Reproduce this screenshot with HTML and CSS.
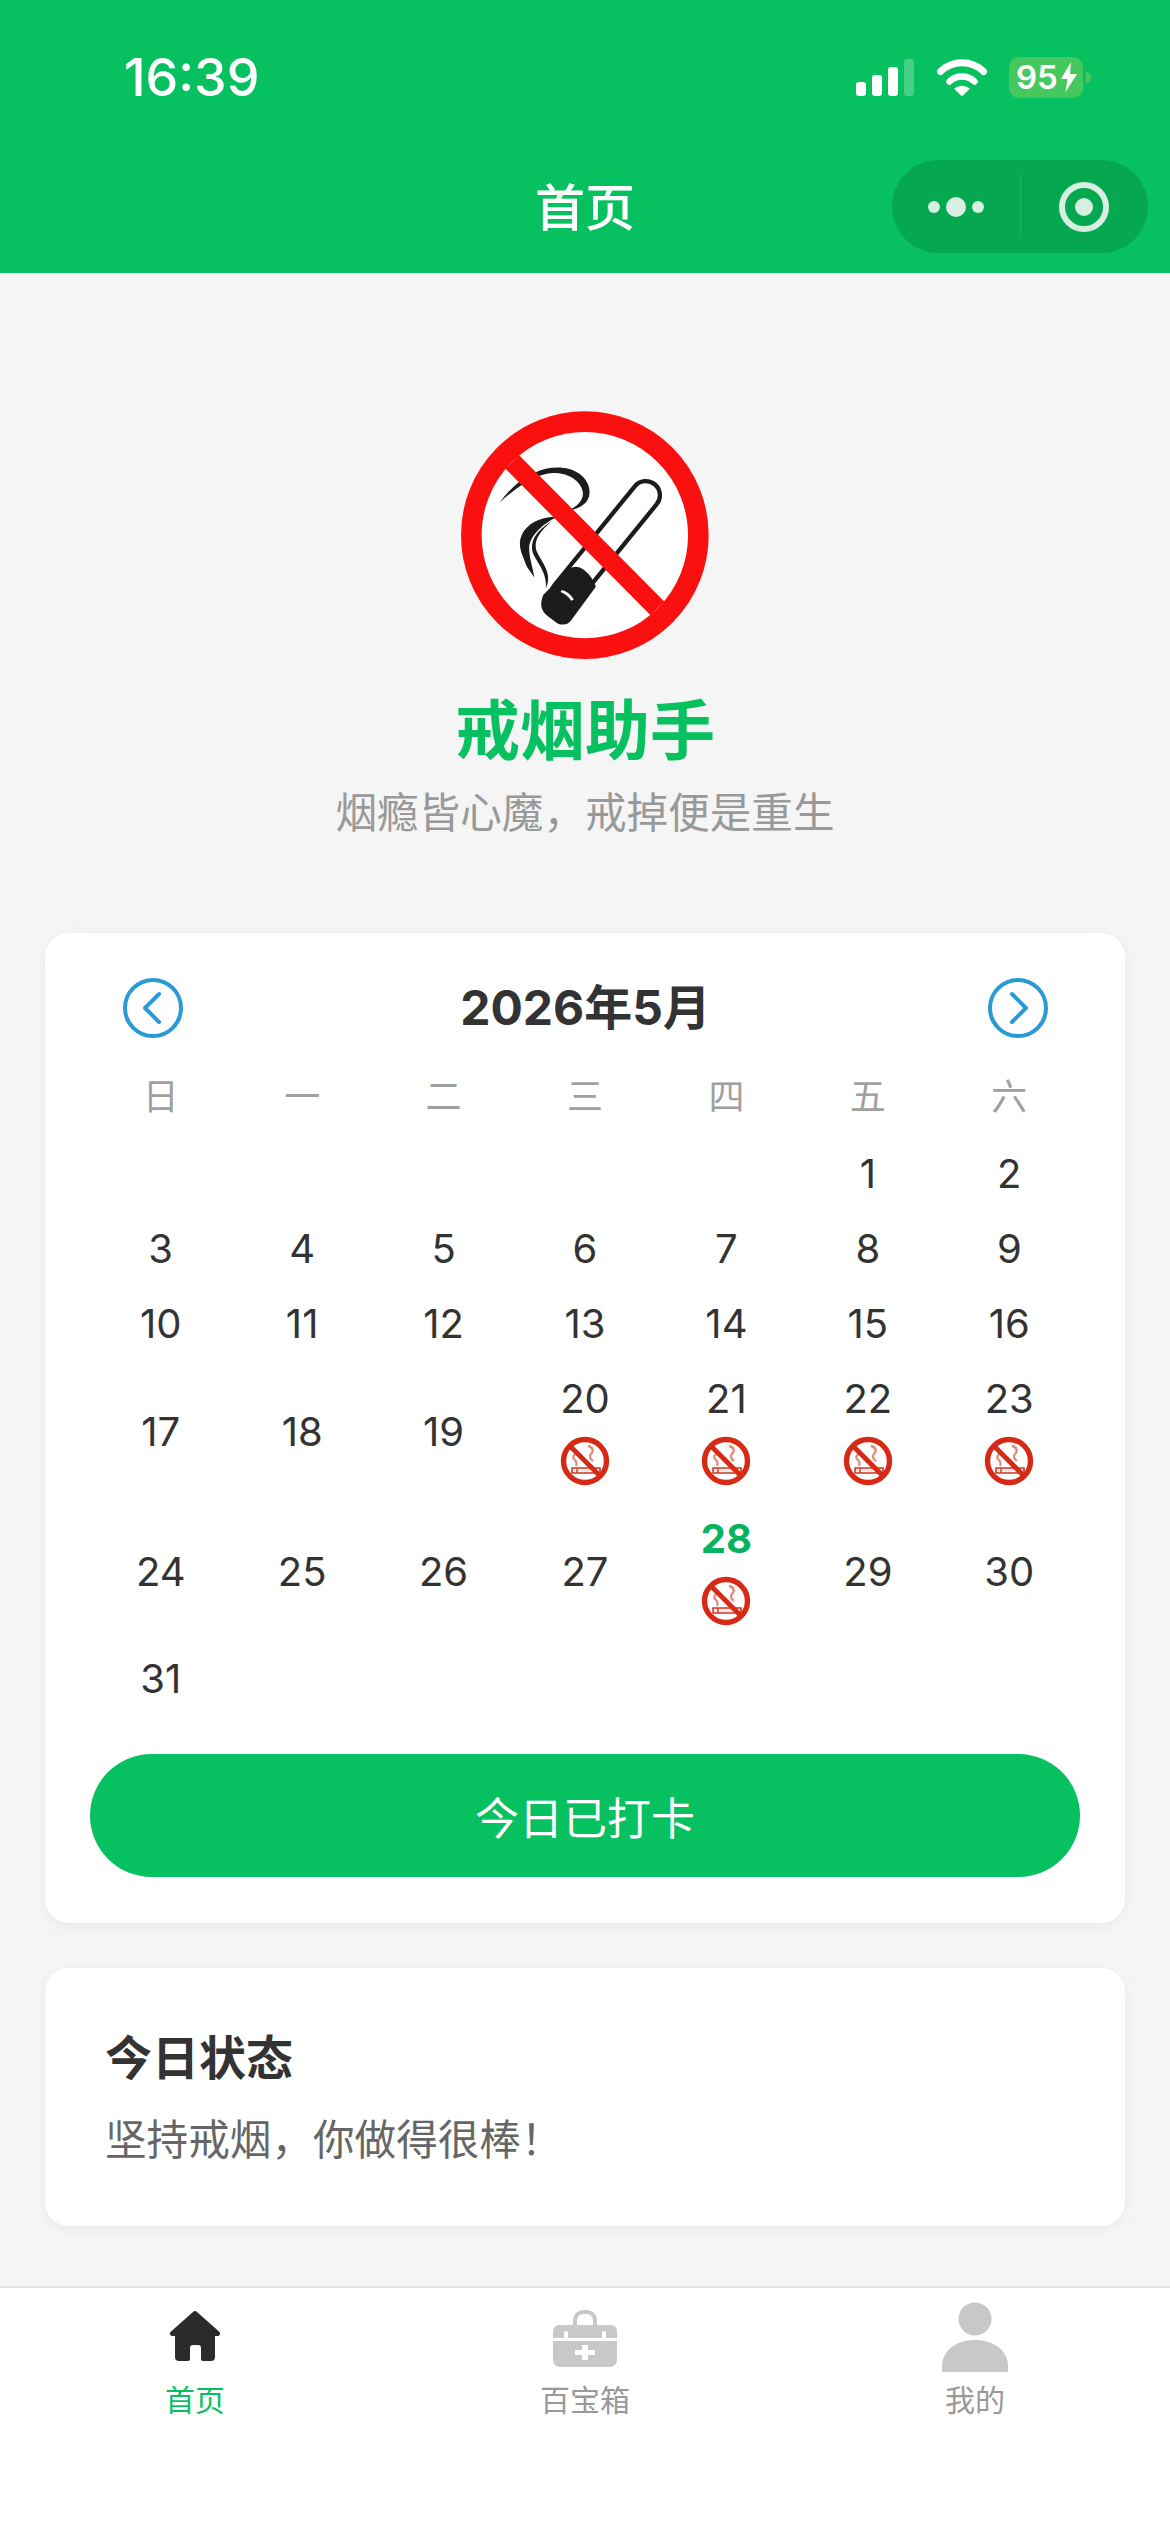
FILE: index.html
```html
<!DOCTYPE html>
<html lang="zh-CN">
<head>
<meta charset="utf-8">
<title>戒烟助手</title>
<link rel="stylesheet" href="styles.css">
</head>
<body>
<svg class="defs" aria-hidden="true">
  <symbol id="stamp" viewBox="0 0 50 50">
    <g filter="url(#soft)">
      <circle cx="25" cy="25" r="21.5" fill="#fff" stroke="#d62c14" stroke-width="5.4"/>
      <path d="M28 10c5 1 6 5 3 8-2 2-1 5 2 7" fill="none" stroke="#e08d7e" stroke-width="2.4"/>
      <path d="M18 17c-5 1-6 5-3 7 2 2 2 4 1 6" fill="none" stroke="#e08d7e" stroke-width="2.2"/>
      <path d="M12 32h28v5H12z" fill="#fbe9e5" stroke="#cc3a26" stroke-width="1.6"/>
      <path d="M17 32v5" stroke="#cc3a26" stroke-width="1.4"/>
      <path d="M10 10l30 30" stroke="#d62c14" stroke-width="4.8"/>
    </g>
  </symbol>
  <filter id="soft"><feGaussianBlur stdDeviation="0.55"/></filter>
</svg>

<div class="page">
  <header class="header">
    <div class="status">
      <span class="time">16:39</span>
      <div class="status-icons">
        <div class="signal">
          <i class="bar b1"></i><i class="bar b2"></i><i class="bar b3"></i><i class="bar b4"></i>
        </div>
        <svg class="wifi" viewBox="0 0 50 38" width="50" height="38">
          <path d="M3.500 13.500A31 31 0 0 1 46.500 13.500" fill="none" stroke="#fff" stroke-width="7" stroke-linecap="round"/>
          <path d="M12.500 23.500A18 18 0 0 1 37.500 23.500" fill="none" stroke="#fff" stroke-width="6.500" stroke-linecap="round"/>
          <path d="M17 30.500Q25 25 33 30.500L26 37.500Q25 38.300 24 37.500Z" fill="#fff"/>
        </svg>
        <div class="battery">
          <span class="battery-level">95</span>
          <svg class="bolt" viewBox="0 0 18 30" width="18" height="30">
            <path d="M11 0L1 17h6.500L5.500 30 17 12h-7z" fill="#fff"/>
          </svg>
        </div>
        <i class="nub"></i>
      </div>
    </div>
    <div class="nav">
      <h1 class="nav-title">首页</h1>
      <div class="capsule">
        <div class="capsule-side">
          <i class="dot"></i><i class="dot dot-big"></i><i class="dot"></i>
        </div>
        <i class="capsule-line"></i>
        <div class="capsule-side">
          <i class="target"></i>
        </div>
      </div>
    </div>
  </header>

  <main class="main">
    <section class="hero">
      <svg class="logo" viewBox="125 92 745 745" width="248" height="248">
        <circle cx="497" cy="465" r="341" fill="#fff" stroke="#fb1010" stroke-width="62"/>
        <path d="M440 640L680 345" fill="none" stroke="#1c1c1c" stroke-width="98" stroke-linecap="round"/>
        <path d="M440 640L680 345" fill="none" stroke="#fff" stroke-width="72" stroke-linecap="round"/>
        <path d="M372 645L445 570Q470 550 495 570 520 590 530 620L455 722Q440 740 415 730L385 708Q355 685 372 645Z" fill="#1c1c1c"/>
        <path d="M428 630q22 6 36 28l-8 4q-12-18-32-26z" fill="#fff"/>
        <path d="M240 368C262 338 296 300 345 278 390 256 445 256 480 280 516 306 522 352 492 374 480 384 465 388 448 390 472 380 494 362 491 335 486 304 450 276 400 278 345 282 290 322 240 368Z" fill="#1c1c1c"/>
        <path d="M412 411C370 408 324 428 307 465 292 500 313 530 323 560L345 592C341 560 328 530 330 500 334 465 372 430 412 411Z" fill="#1c1c1c"/>
        <path d="M400 421C364 445 334 470 339 510 344 540 385 570 380 625 402 580 366 545 353 515 340 480 366 450 400 421Z" fill="#1c1c1c"/>
        <path d="M279 245L715 685" fill="none" stroke="#fb1010" stroke-width="58"/>
      </svg>
      <h2 class="app-name">戒烟助手</h2>
      <p class="slogan">烟瘾皆心魔，戒掉便是重生</p>
    </section>

    <section class="card calendar">
      <div class="cal-head">
        <svg class="arrow" viewBox="0 0 60 60" width="60" height="60">
          <circle cx="30" cy="30" r="28" fill="none" stroke="#2a9ad6" stroke-width="4"/>
          <path d="M36 16L22 30l14 14" fill="none" stroke="#2a9ad6" stroke-width="4" stroke-linecap="round" stroke-linejoin="round"/>
        </svg>
        <span class="cal-title">2026年5月</span>
        <svg class="arrow" viewBox="0 0 60 60" width="60" height="60">
          <circle cx="30" cy="30" r="28" fill="none" stroke="#2a9ad6" stroke-width="4"/>
          <path d="M24 16l14 14-14 14" fill="none" stroke="#2a9ad6" stroke-width="4" stroke-linecap="round" stroke-linejoin="round"/>
        </svg>
      </div>
      <div class="week">
        <span>日</span><span>一</span><span>二</span><span>三</span><span>四</span><span>五</span><span>六</span>
      </div>
      <div class="days">
        <div class="day"></div><div class="day"></div><div class="day"></div><div class="day"></div><div class="day"></div>
        <div class="day"><span>1</span></div><div class="day"><span>2</span></div>
        <div class="day"><span>3</span></div><div class="day"><span>4</span></div><div class="day"><span>5</span></div><div class="day"><span>6</span></div><div class="day"><span>7</span></div><div class="day"><span>8</span></div><div class="day"><span>9</span></div>
        <div class="day"><span>10</span></div><div class="day"><span>11</span></div><div class="day"><span>12</span></div><div class="day"><span>13</span></div><div class="day"><span>14</span></div><div class="day"><span>15</span></div><div class="day"><span>16</span></div>
        <div class="day mid"><span>17</span></div><div class="day mid"><span>18</span></div><div class="day mid"><span>19</span></div>
        <div class="day"><span>20</span><svg class="stamp"><use href="#stamp"/></svg></div>
        <div class="day"><span>21</span><svg class="stamp"><use href="#stamp"/></svg></div>
        <div class="day"><span>22</span><svg class="stamp"><use href="#stamp"/></svg></div>
        <div class="day"><span>23</span><svg class="stamp"><use href="#stamp"/></svg></div>
        <div class="day mid"><span>24</span></div><div class="day mid"><span>25</span></div><div class="day mid"><span>26</span></div><div class="day mid"><span>27</span></div>
        <div class="day today"><span>28</span><svg class="stamp"><use href="#stamp"/></svg></div>
        <div class="day mid"><span>29</span></div><div class="day mid"><span>30</span></div>
        <div class="day"><span>31</span></div>
      </div>
      <button class="checkin">今日已打卡</button>
    </section>

    <section class="card state">
      <h3 class="state-title">今日状态</h3>
      <p class="state-text">坚持戒烟，你做得很棒！</p>
    </section>
  </main>

  <nav class="tabbar">
    <div class="tab active">
      <svg class="tab-icon" viewBox="0 0 80 80" width="80" height="80">
        <path d="M38 14a3 3 0 0 1 4 0L64 33.500c2 2 1 4.500-1.500 4.500H60V59a4 4 0 0 1-4 4H48a2 2 0 0 1-2-2V50a3 3 0 0 0-3-3H38a3 3 0 0 0-3 3V61a2 2 0 0 1-2 2H24a4 4 0 0 1-4-4V38H17.500c-2.500 0-3.500-2.500-1.500-4.500Z" fill="#2b2b2b"/>
      </svg>
      <span class="tab-label">首页</span>
    </div>
    <div class="tab">
      <svg class="tab-icon" viewBox="0 0 80 80" width="80" height="80">
        <path d="M30 27v-5a8 8 0 0 1 8-8h4a8 8 0 0 1 8 8v5" fill="none" stroke="#c8c8c8" stroke-width="4"/>
        <path d="M14 27h52a6 6 0 0 1 6 6v7H61v-5a2 2 0 0 0-4 0v5H23v-5a2 2 0 0 0-4 0v5H8v-7a6 6 0 0 1 6-6Z" fill="#c8c8c8"/>
        <path d="M8 43h64v19a7 7 0 0 1-7 7H15a7 7 0 0 1-7-7Z" fill="#c8c8c8"/>
        <path d="M37 47h6v5h7v5h-7v5h-6v-5h-7v-5h7Z" fill="#fff"/>
      </svg>
      <span class="tab-label">百宝箱</span>
    </div>
    <div class="tab">
      <svg class="tab-icon" viewBox="0 0 80 80" width="80" height="80">
        <circle cx="40" cy="21" r="16.500" fill="#c8c8c8"/>
        <path d="M7 74V68C7 52 22 42 40 42s33 10 33 26v6Z" fill="#c8c8c8"/>
      </svg>
      <span class="tab-label">我的</span>
    </div>
  </nav>
</div>
</body>
</html>
```
FILE: styles.css
```css
* { box-sizing: border-box; }
html, body { margin: 0; padding: 0; }
body {
  width: 1170px;
  height: 2532px;
  overflow: hidden;
  font-family: Inter, "Noto Sans CJK SC", sans-serif;
  color: #333;
  background: #f5f5f5;
}
h1, h2, h3, p { margin: 0; font-weight: inherit; font-size: inherit; }
i { display: block; }
.defs { position: absolute; width: 0; height: 0; }

.page { display: flex; flex-direction: column; height: 2532px; }

/* header */
.header { height: 273px; background: #07c160; color: #fff; flex: none; }
.status {
  height: 140px;
  padding: 14px 0 0 124px;
  display: flex;
  align-items: center;
  justify-content: space-between;
}
.time { font-size: 52px; font-weight: 500; line-height: 60px; padding-top: 2px; }
.status-icons { display: flex; align-items: center; width: 314px; height: 42px; }
.signal { display: flex; align-items: flex-end; gap: 6px; width: 58px; height: 37px; margin-top: 1px; }
.bar { width: 10px; background: #fff; border-radius: 3px; }
.b1 { height: 14px; }
.b2 { height: 21px; }
.b3 { height: 29px; }
.b4 { height: 37px; background: rgba(255,255,255,.25); }
.wifi { margin-left: 23px; }
.battery {
  margin-left: 22px;
  width: 74px;
  height: 41px;
  border-radius: 10px;
  background: #45c95e;
  display: flex;
  align-items: center;
  padding-left: 7px;
}
.battery-level { font-size: 33px; font-weight: 600; line-height: 41px; }
.bolt { margin-left: 2px; }
.nub { width: 5px; height: 11px; margin-left: 3px; border-radius: 0 6px 6px 0; background: #45c95e; }

.nav { height: 133px; padding-top: 3px; position: relative; display: flex; align-items: center; justify-content: center; }
.nav-title { font-size: 50px; font-weight: 500; line-height: 70px; }
.capsule {
  position: absolute;
  left: 892px;
  top: 20px;
  width: 256px;
  height: 93px;
  border-radius: 47px;
  background: #06a751;
  display: flex;
  align-items: center;
}
.capsule-side { flex: 1; display: flex; align-items: center; justify-content: center; gap: 6px; }
.capsule-line { width: 1px; height: 64px; background: rgba(255,255,255,.1); }
.dot { width: 12px; height: 12px; border-radius: 50%; background: #d6efe0; }
.dot-big { width: 20px; height: 20px; }
.target {
  width: 50px;
  height: 50px;
  border-radius: 50%;
  border: 6px solid #d6efe0;
  display: flex;
  align-items: center;
  justify-content: center;
}
.target::after { content: ""; width: 18px; height: 18px; border-radius: 50%; background: #d6efe0; }

/* main */
.main { flex: 1; padding: 138px 45px 0; }
.hero { display: flex; flex-direction: column; align-items: center; }
.logo { display: block; }
.app-name { margin-top: 27px; font-size: 65px; font-weight: 700; line-height: 90px; color: #07c160; }
.slogan { margin-top: 7px; font-size: 41.6px; line-height: 60px; color: #999; }

.card { background: #fff; border-radius: 24px; box-shadow: 0 3px 14px rgba(0,0,0,.05); }
.calendar { margin-top: 90px; padding: 45px; height: 990px; }
.cal-head { display: flex; align-items: center; justify-content: space-between; height: 60px; padding: 0 32px 0 33px; }
.arrow { display: block; }
.cal-title { font-size: 48px; font-weight: 700; line-height: 60px; }
.week, .days { display: grid; grid-template-columns: repeat(7, 1fr); }
.week { margin-top: 22px; height: 75px; align-items: center; text-align: center; font-size: 36px; line-height: 75px; color: #a0a0a0; }
.days { margin-top: 1px; font-size: 40px; }
.day {
  min-height: 75px;
  padding: 10px 0;
  display: flex;
  flex-direction: column;
  align-items: center;
  line-height: 55px;
}
.day.mid { justify-content: center; }
.today span { color: #07b35c; font-weight: 700; }
.stamp { width: 50px; height: 50px; margin: 10px 0 5px; display: block; }
.checkin {
  display: block;
  width: 100%;
  height: 123px;
  margin-top: 38px;
  border: 0;
  border-radius: 62px;
  background: #07c160;
  color: #fff;
  font: 400 44px Inter, "Noto Sans CJK SC", sans-serif;
}

.state { margin-top: 45px; height: 258px; padding: 60px 60px 0; }
.state-title { font-size: 47px; font-weight: 700; line-height: 60px; }
.state-text { margin-top: 22px; font-size: 41.6px; line-height: 60px; color: #666; }

/* tabbar */
.tabbar {
  flex: none;
  height: 246px;
  background: #fff;
  border-top: 2px solid #e6e6e6;
  display: grid;
  grid-template-columns: repeat(3, 1fr);
}
.tab { padding-top: 10px; display: flex; flex-direction: column; align-items: center; }
.tab-icon { display: block; }
.tab-label { margin-top: 2px; font-size: 30px; line-height: 40px; color: #999; }
.active .tab-label { color: #07c160; }
```
